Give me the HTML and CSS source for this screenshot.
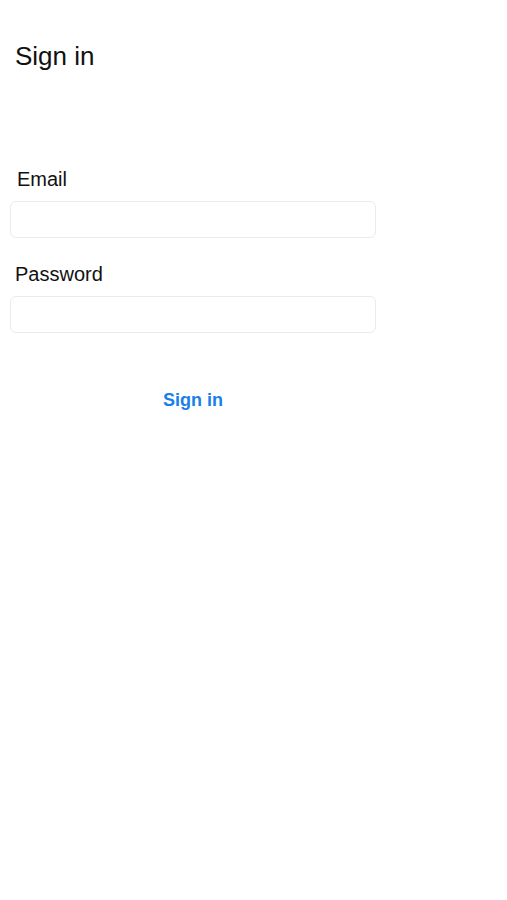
FILE: index.html
```html
<!DOCTYPE html>
<html lang="en">
<head>
  <meta charset="UTF-8">
  <meta name="viewport" content="width=device-width, initial-scale=1.0">
  <title>Sign in</title>
  <link rel="stylesheet" href="styles.css">
</head>
<body>
  <div class="screen">
    <h1 class="title">Sign in</h1>

    <form class="login-form" id="loginForm">
      <div class="form-group">
        <label for="email" class="label-email">Email</label>
        <input type="email" id="email" name="email">
      </div>

      <div class="form-group">
        <label for="password">Password</label>
        <input type="password" id="password" name="password">
      </div>

      <button type="submit">Sign in</button>
    </form>
  </div>
</body>
</html>
```

FILE: styles.css
```css
body {
  font-family: 'Liberation Sans', Arial, sans-serif;
  background-color: #ffffff;
  color: #111111;
  margin: 0;
}

.screen {
  padding: 41px 0 0 0;
}

.title {
  margin: 0 0 98px 15px;
  font-size: 26px;
  font-weight: 400;
  line-height: 30px;
}

.login-form {
  width: 366px;
  margin-left: 10px;
}

.form-group {
  margin-bottom: 26px;
}

label {
  display: block;
  margin: 0 0 11px 5px;
  font-size: 20px;
  line-height: 21px;
}

.label-email {
  margin-left: 7px;
}

input {
  display: block;
  width: 100%;
  height: 37px;
  padding: 0 10px;
  border: 1px solid #ebebeb;
  border-radius: 6px;
  font-size: 16px;
  box-sizing: border-box;
  background-color: #ffffff;
  outline: none;
}

button {
  display: block;
  width: 100%;
  margin-top: 47px;
  padding: 10px 0;
  background: none;
  border: none;
  color: #1a80e8;
  font-family: 'Liberation Sans', Arial, sans-serif;
  font-size: 18px;
  font-weight: 700;
  line-height: 21px;
  cursor: pointer;
}
```
